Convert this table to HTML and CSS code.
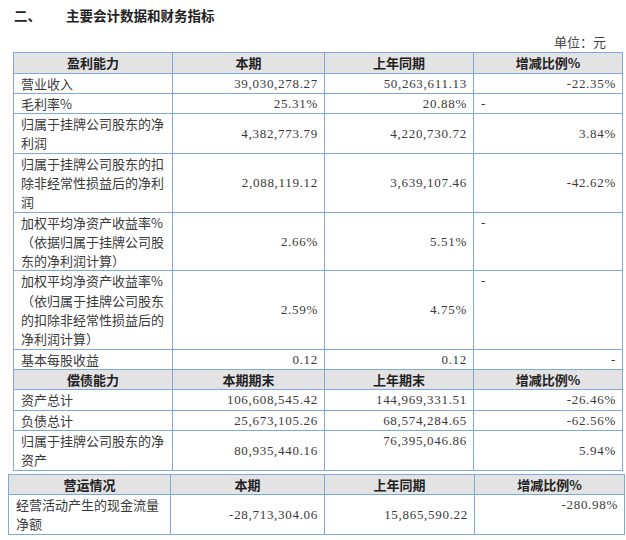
FILE: index.html
```html
<!DOCTYPE html>
<html lang="zh">
<head>
<meta charset="utf-8">
<link rel="stylesheet" href="styles.css">
</head>
<body>
<div class="page">
  <h2 class="title"><span class="num">二、</span>主要会计数据和财务指标</h2>
  <div class="unit">单位：元</div>
  <table class="fin t1">
    <colgroup><col class="c1"><col class="c2"><col class="c3"><col class="c4"></colgroup>
    <tr class="hd"><th>盈利能力</th><th>本期</th><th>上年同期</th><th>增减比例%</th></tr>
    <tr><td class="lbl">营业收入</td><td class="n">39,030,278.27</td><td class="n">50,263,611.13</td><td class="n">-22.35%</td></tr>
    <tr><td class="lbl">毛利率%</td><td class="n">25.31%</td><td class="n">20.88%</td><td class="dash">-</td></tr>
    <tr><td class="lbl">归属于挂牌公司股东的净<br>利润</td><td class="n">4,382,773.79</td><td class="n">4,220,730.72</td><td class="n">3.84%</td></tr>
    <tr><td class="lbl">归属于挂牌公司股东的扣<br>除非经常性损益后的净利<br>润</td><td class="n">2,088,119.12</td><td class="n">3,639,107.46</td><td class="n">-42.62%</td></tr>
    <tr><td class="lbl">加权平均净资产收益率%<br>（依据归属于挂牌公司股<br>东的净利润计算）</td><td class="n">2.66%</td><td class="n">5.51%</td><td class="dash top">-</td></tr>
    <tr><td class="lbl">加权平均净资产收益率%<br>（依归属于挂牌公司股东<br>的扣除非经常性损益后的<br>净利润计算）</td><td class="n">2.59%</td><td class="n">4.75%</td><td class="dash top">-</td></tr>
    <tr><td class="lbl">基本每股收益</td><td class="n">0.12</td><td class="n">0.12</td><td class="n">-</td></tr>
    <tr class="hd"><th>偿债能力</th><th>本期期末</th><th>上年期末</th><th>增减比例%</th></tr>
    <tr><td class="lbl">资产总计</td><td class="n">106,608,545.42</td><td class="n">144,969,331.51</td><td class="n">-26.46%</td></tr>
    <tr><td class="lbl">负债总计</td><td class="n">25,673,105.26</td><td class="n">68,574,284.65</td><td class="n">-62.56%</td></tr>
    <tr><td class="lbl">归属于挂牌公司股东的净<br>资产</td><td class="n">80,935,440.16</td><td class="n top">76,395,046.86</td><td class="n">5.94%</td></tr>
  </table>
  <table class="fin t2">
    <colgroup><col class="d1"><col class="d2"><col class="d3"><col class="d4"></colgroup>
    <tr class="hd"><th>营运情况</th><th>本期</th><th>上年同期</th><th>增减比例%</th></tr>
    <tr><td class="lbl">经营活动产生的现金流量<br>净额</td><td class="n">-28,713,304.06</td><td class="n">15,865,590.22</td><td class="n top">-280.98%</td></tr>
  </table>
</div>
</body>
</html>
```
FILE: styles.css
```css
html, body {
  margin: 0;
  padding: 0;
  background: #ffffff;
}
.page {
  padding-top: 5px;
  font-family: "Liberation Serif", "Noto Sans CJK SC", serif;
  color: #3a3a3a;
  font-size: 13px;
}
.title {
  margin: 0;
  padding-left: 14px;
  font-family: "Noto Sans CJK SC", sans-serif;
  font-size: 13.5px;
  line-height: 20px;
  font-weight: 700;
  color: #222;
}
.title .num {
  display: inline-block;
  width: 52px;
}
.unit {
  margin-top: 7px;
  text-align: right;
  padding-right: 20px;
  line-height: 20px;
  font-family: "Noto Sans CJK SC", sans-serif;
  font-size: 13px;
  color: #444;
}
.fin {
  border-collapse: collapse;
  table-layout: fixed;
  line-height: 19.3px;
}
.t1 {
  margin-left: 13px;
  width: 609px;
}
.t2 {
  margin-left: 8px;
  margin-top: 3px;
  width: 616px;
}
.c1 { width: 159px; }
.c2 { width: 152px; }
.c3 { width: 149px; }
.c4 { width: 149px; }
.d1 { width: 162px; }
.d2 { width: 154px; }
.d3 { width: 150px; }
.d4 { width: 150px; }
.fin th, .fin td {
  border: 1px solid #7ea9dc;
  padding: 0 7px;
  vertical-align: middle;
}
.fin th {
  background: #e3e3e3;
  font-family: "Noto Sans CJK SC", sans-serif;
  font-weight: 700;
  font-size: 13px;
  color: #222;
  text-align: center;
  line-height: 19.5px;
}
.fin .lbl {
  font-family: "Noto Sans CJK SC", sans-serif;
  text-align: left;
  white-space: nowrap;
}
.fin .n {
  text-align: right;
  letter-spacing: 0.7px;
  padding-right: 6px;
}
.fin .dash {
  text-align: left;
}
.fin td.top {
  vertical-align: top;
}
```
